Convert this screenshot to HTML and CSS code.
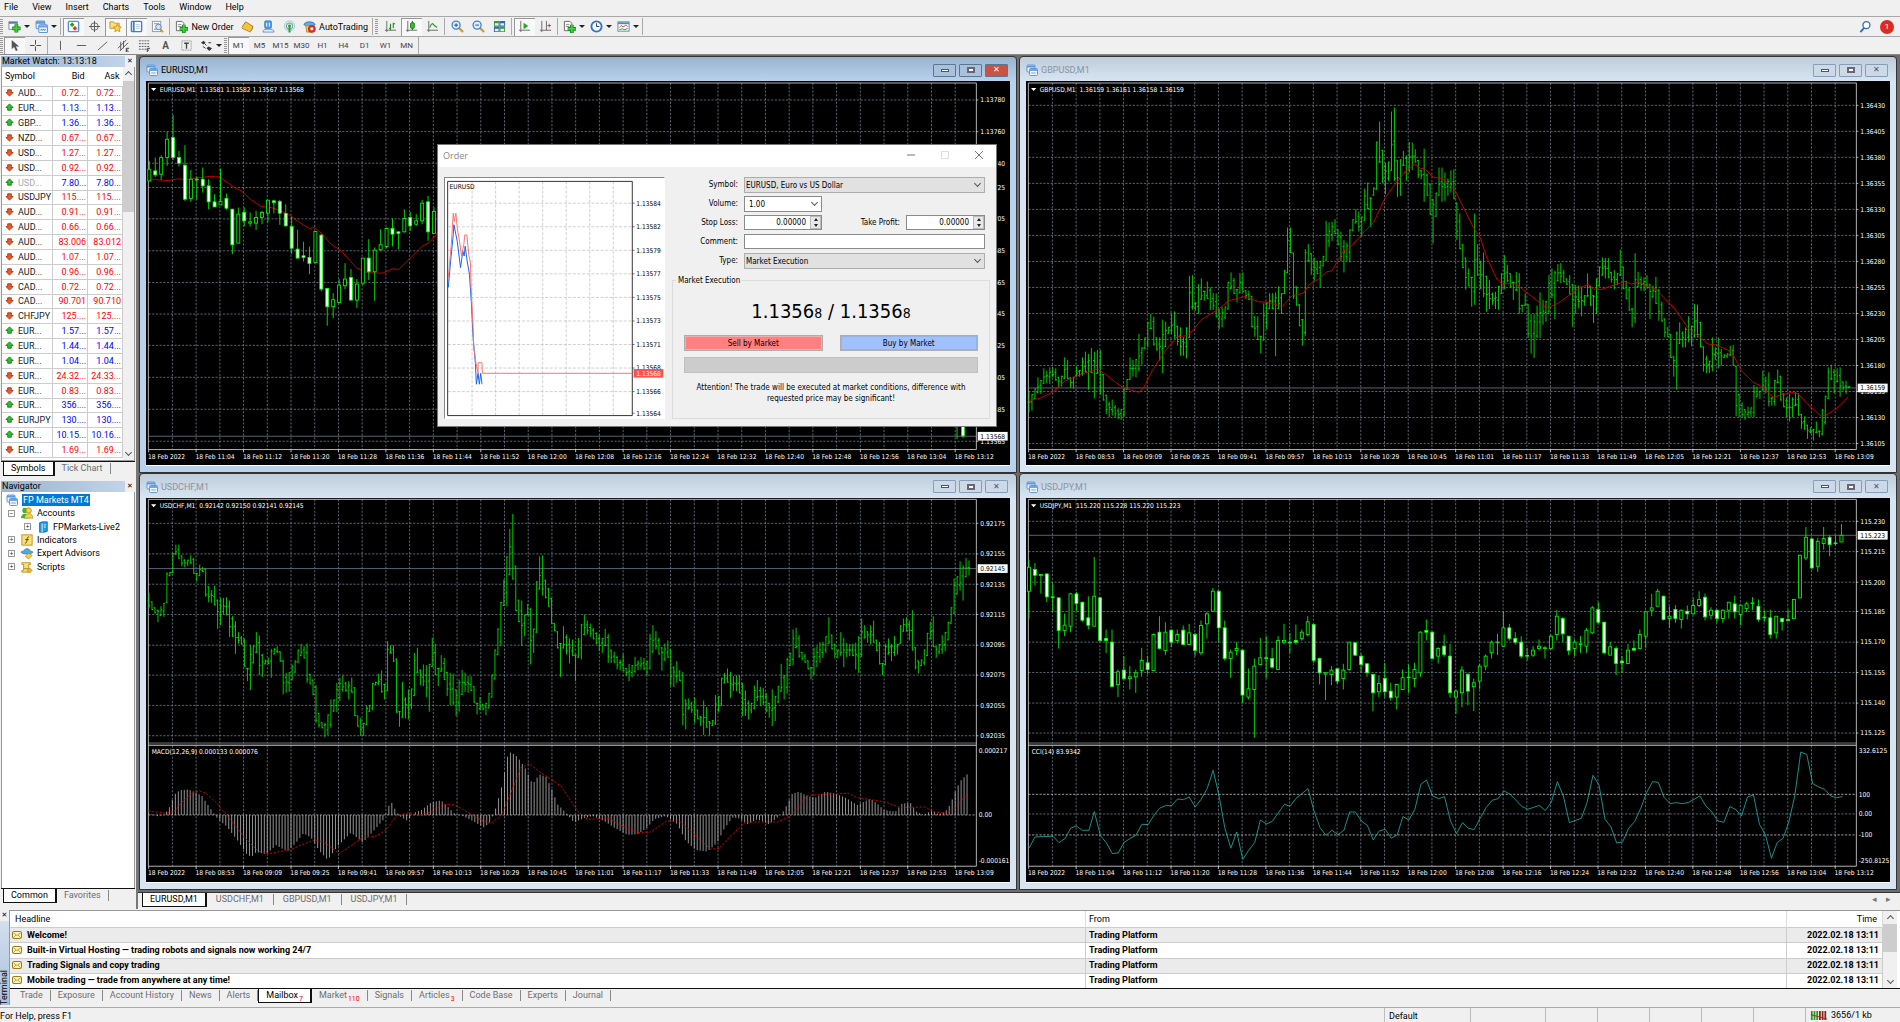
FILE: index.html
```html
<!DOCTYPE html>
<html lang="en">
<head>
<meta charset="utf-8">
<title>Trading Platform</title>
<link rel="stylesheet" href="styles.css">
</head>
<body>
<svg class="sprite" aria-hidden="true">
  <symbol id="i-win" viewBox="0 0 12 12"><rect x="1" y="1" width="8" height="7" rx="1" fill="#eaf3ff" stroke="#5f97dc"/><path d="M1 2.500h8" stroke="#5f97dc" stroke-width="2"/><rect x="3.500" y="4.500" width="8" height="7" rx="1" fill="#f4f9ff" stroke="#5f97dc"/><path d="M3.500 6h8" stroke="#6fa4e6" stroke-width="2"/><path d="M5 9.500l1-1 1 1 1-1 1 1 1-1" stroke="#5f97dc" fill="none"/></symbol>
  <symbol id="i-plus" viewBox="0 0 14 14"><rect x="1" y="2" width="9" height="8" fill="#fff" stroke="#6d8ab0"/><path d="M1 3h9" stroke="#4f79b0" stroke-width="2"/><path d="M9 4.500v9M4.500 9h9" stroke="#1f8a1f" stroke-width="4"/><path d="M9 5v8M5 9h8" stroke="#3fd03f" stroke-width="2"/></symbol>
  <symbol id="i-watch" viewBox="0 0 14 14"><rect x="1.500" y="1.500" width="11" height="11" rx="1" fill="#fff" stroke="#4f93d8" stroke-width="1.500"/><path d="M3 5l2.500-2.500L8 5 5.500 7.500z" fill="#22a022"/><path d="M6 9l2.500-2.500L11 9l-2.500 2.500z" fill="#e03a1c"/></symbol>
  <symbol id="i-target" viewBox="0 0 14 14"><circle cx="7" cy="7" r="4" fill="none" stroke="#666"/><path d="M7 1v12M1 7h12" stroke="#555"/></symbol>
  <symbol id="i-star" viewBox="0 0 14 14"><path d="M1 2h4l1 1.500h5V9H1z" fill="#f6dc84" stroke="#c59a2c"/><path d="M9 4.500l1.300 2.700 3 .4-2.200 2 .6 3L9 11.200l-2.700 1.400.6-3-2.200-2 3-.4z" fill="#ffd43c" stroke="#b98a12" stroke-width=".8"/></symbol>
  <symbol id="i-data" viewBox="0 0 14 14"><rect x="1.500" y="1.500" width="11" height="11" rx="1" fill="#fff" stroke="#3f7fc8" stroke-width="1.500"/><path d="M4 2v10" stroke="#3f7fc8" stroke-width="2"/><path d="M6.500 5h4M6.500 7h4M6.500 9h4" stroke="#a9c4e4"/></symbol>
  <symbol id="i-test" viewBox="0 0 14 14"><rect x="1.500" y="1.500" width="9" height="11" fill="#fdfdfd" stroke="#8b97a8"/><path d="M3 4h6M3 10h3" stroke="#88a"/><circle cx="8" cy="7.500" r="3" fill="#cfe4fa" stroke="#5a83b4"/><path d="M10.200 10l2.800 3" stroke="#c9962c" stroke-width="2"/></symbol>
  <symbol id="i-order" viewBox="0 0 14 14"><path d="M1.500 1.500h6l2 2v8h-8z" fill="#fff" stroke="#666"/><path d="M3 5h4M3 7h4" stroke="#888"/><path d="M9.500 5v9M5 9.500h9" stroke="#1f8a1f" stroke-width="4"/><path d="M9.500 5.500v8M5.500 9.500h8" stroke="#3fd03f" stroke-width="2"/></symbol>
  <symbol id="i-gold" viewBox="0 0 14 14"><path d="M1 8l4-6 8 5-3 5.500z" fill="#f3c53e" stroke="#a87812"/><path d="M1 8l9 4.500 3-3" fill="none" stroke="#fff0b0"/><path d="M1 8v1.500l9 4 3-4V8l-3 4.500z" fill="#c58d1c"/></symbol>
  <symbol id="i-person" viewBox="0 0 14 14"><rect x="3" y="1" width="7" height="8" rx="1" fill="#4aa3ee" stroke="#2f78c4"/><path d="M5 3v4M8 3v4" stroke="#fff"/><path d="M1 13c0-3 3-3 6-3s6 0 6 3z" fill="#e3eefb" stroke="#6a92c0"/></symbol>
  <symbol id="i-signal" viewBox="0 0 14 14"><g fill="none"><circle cx="7" cy="6.500" r="5.500" stroke="#9cc0d8"/><circle cx="7" cy="6.500" r="3.300" stroke="#6aa98c" stroke-width="1.200"/></g><circle cx="7" cy="6.500" r="1.600" fill="#2b9a3e"/><path d="M7 7v6.500" stroke="#2b9a3e" stroke-width="2"/></symbol>
  <symbol id="i-auto" viewBox="0 0 14 14"><path d="M1 5c1-4 11-4 12 0l-6 3z" fill="#62aee6" stroke="#2f78b4"/><path d="M3 6h8l-1 7H4z" fill="#f4c93c" stroke="#b98a1a"/><circle cx="9.500" cy="9.500" r="4.200" fill="#dd2a1b"/><rect x="8" y="8" width="3" height="3" fill="#fff"/></symbol>
  <symbol id="i-bars" viewBox="0 0 14 14"><path d="M3 1v12M1 11h12" stroke="#666" fill="none"/><path d="M7 4v7M5.500 9h1.500M10 3v6M10 4h2" stroke="#1d8f1d" stroke-width="1.200"/></symbol>
  <symbol id="i-candle" viewBox="0 0 14 14"><path d="M3 1v12M1 11h12" stroke="#666" fill="none"/><path d="M8 1v10" stroke="#137513"/><rect x="6" y="3" width="4" height="6" rx="1" fill="#2ecb2e" stroke="#137513"/></symbol>
  <symbol id="i-line" viewBox="0 0 14 14"><path d="M3 1v12M1 11h12" stroke="#666" fill="none"/><path d="M4 8c2-5 3-5 5-2l3 2" stroke="#1d9f1d" stroke-width="1.200" fill="none"/></symbol>
  <symbol id="i-zin" viewBox="0 0 14 14"><path d="M8.500 8.500l4.500 4.500" stroke="#d09c2c" stroke-width="2.400"/><circle cx="5.500" cy="5.500" r="4.300" fill="#e3f1ff" stroke="#3f82d2" stroke-width="1.400"/><path d="M3.500 5.500h4M5.500 3.500v4" stroke="#2566b8" stroke-width="1.200"/></symbol>
  <symbol id="i-zout" viewBox="0 0 14 14"><path d="M8.500 8.500l4.500 4.500" stroke="#d09c2c" stroke-width="2.400"/><circle cx="5.500" cy="5.500" r="4.300" fill="#e3f1ff" stroke="#3f82d2" stroke-width="1.400"/><path d="M3.500 5.500h4" stroke="#2566b8" stroke-width="1.200"/></symbol>
  <symbol id="i-tiles" viewBox="0 0 14 14"><path d="M1 1h6v6H1zM7 7h6v6H7z" fill="#3f9a2c"/><path d="M7 1h6v6H7zM1 7h6v6H1z" fill="#2f68b8"/><path d="M2 3.500h4v2.500H2zM8 3.500h4v2.500H8zM2 9.500h4V12H2zM8 9.500h4V12H8z" fill="#e8f2ff"/></symbol>
  <symbol id="i-scroll" viewBox="0 0 14 14"><path d="M3 1v12M1 11h12" stroke="#666" fill="none"/><path d="M6 3l5 3.500L6 10z" fill="#23a823"/></symbol>
  <symbol id="i-shift" viewBox="0 0 14 14"><path d="M3 1v12M1 11h12M8 1v10" stroke="#666" fill="none"/><path d="M9 6h4M11 4v4" stroke="#d0401c"/></symbol>
  <symbol id="i-clock" viewBox="0 0 14 14"><circle cx="7" cy="7" r="5.500" fill="#f3f9ff" stroke="#2f74c8" stroke-width="2"/><path d="M7 3.500V7h3" stroke="#333" fill="none"/></symbol>
  <symbol id="i-tpl" viewBox="0 0 14 14"><rect x="1" y="2" width="12" height="10" fill="#fff" stroke="#4f88c4"/><path d="M1 3.500h12" stroke="#4f88c4" stroke-width="2"/><path d="M2.500 8l2-2 2 1.500 3-2 2 1.500" stroke="#d0501c" fill="none"/><path d="M2.500 10.500l3-1 3 1 3-1.500" stroke="#2a9a2a" fill="none"/></symbol>
  <symbol id="i-cursor" viewBox="0 0 14 14"><path d="M4 1v10l2.500-2.500L8.500 13l2-1-2-4H12z" fill="#555"/></symbol>
  <symbol id="i-cross" viewBox="0 0 14 14"><path d="M7 1v5M7 8v5M1 7h5M8 7h5" stroke="#444"/></symbol>
  <symbol id="i-v" viewBox="0 0 14 14"><path d="M7 2v10" stroke="#555"/></symbol>
  <symbol id="i-h" viewBox="0 0 14 14"><path d="M2 7h10" stroke="#555"/></symbol>
  <symbol id="i-d" viewBox="0 0 14 14"><path d="M2 12L12 3" stroke="#555"/></symbol>
  <symbol id="i-chan" viewBox="0 0 14 14"><path d="M1 10l9-9M3 13l9-9M4 3v9M7 2v8" stroke="#555" fill="none"/><path d="M13 10h-3v4h3M10 12h2" stroke="#333" fill="none"/></symbol>
  <symbol id="i-fib" viewBox="0 0 14 14"><path d="M1 2h12M1 5h12M1 8h12M1 11h8" stroke="#555" stroke-dasharray="2 1"/><path d="M13 10h-3v4M10 12h2" stroke="#333" fill="none"/></symbol>
  <symbol id="i-box" viewBox="0 0 14 14"><rect x="2" y="2" width="10" height="10" fill="none" stroke="#777" stroke-dasharray="1 1"/><path d="M4.500 4.500h5M7 4.500v6" stroke="#444" stroke-width="1.500"/></symbol>
  <symbol id="i-arrows" viewBox="0 0 14 14"><path d="M1 4l3-2 2 2-2 2zM7 10l2-2 4 2-3 3z" fill="#333"/><path d="M5 5l2 2M3 8l3 2M9 4h3" stroke="#333"/></symbol>
  <symbol id="i-find" viewBox="0 0 14 14"><circle cx="8" cy="5.500" r="3.800" fill="#fff" stroke="#3566c8" stroke-width="1.400"/><path d="M5.500 8.500L1.500 13" stroke="#3566c8" stroke-width="2"/></symbol>
  <symbol id="i-up" viewBox="0 0 10 10"><path d="M5 1l4 4H7v3H3V5H1z" fill="#2fc02f" stroke="#137a13"/></symbol>
  <symbol id="i-dn" viewBox="0 0 10 10"><path d="M5 9l4-4H7V2H3v3H1z" fill="#f0582c" stroke="#a83212"/></symbol>
  <symbol id="i-mail" viewBox="0 0 10 8"><rect x=".5" y=".5" width="9" height="7" rx="1" fill="#fff3b8" stroke="#9a7b1c"/><path d="M1 1.500l4 3 4-3M1 7l3-3M9 7L6 4" stroke="#b08f2c" fill="none" stroke-width=".8"/></symbol>
  <symbol id="i-acc" viewBox="0 0 14 14"><circle cx="4.500" cy="4" r="3" fill="#39b82c"/><path d="M0 13c0-7 9-7 9 0z" fill="#39b82c"/><circle cx="9" cy="4" r="3.200" fill="#f5cf45" stroke="#a57b12" stroke-width=".7"/><path d="M4 13c0-7 10-7 10 0z" fill="#f5cf45" stroke="#a57b12" stroke-width=".7"/></symbol>
  <symbol id="i-srv" viewBox="0 0 14 14"><path d="M3 2l3-1h6v11l-3 1H3z" fill="#1f9be8" stroke="#0f6fb4"/><path d="M6 3v10M8 4.500h2.500M8 7h2.500" stroke="#fff"/></symbol>
  <symbol id="i-f" viewBox="0 0 14 14"><rect x="1" y="1" width="12" height="12" fill="#fbdf74" stroke="#b48d1c"/><path d="M9.500 3.500c-2-.6-2.200 1-2.500 3.500-.3 2.600-.6 4-2.500 3.500M5 6.500h4" stroke="#5a4508" stroke-width="1.100" fill="none"/></symbol>
  <symbol id="i-hat" viewBox="0 0 14 14"><path d="M0 6c1-1 2-1 3-1 1-4 7-4 8 0 1 0 2 0 3 1-2 3-12 3-14 0z" fill="#53a9dd" stroke="#2b75a8" stroke-width=".8"/><path d="M9 7l4 3-4 4-4-3z" fill="#f5cf45" stroke="#a57b12" stroke-width=".7"/></symbol>
  <symbol id="i-scr" viewBox="0 0 14 14"><path d="M1 2h10v2H9v5H3V4H1z" fill="#f7dd80" stroke="#b48d1c"/><path d="M3 9h7v4H1v-2h2z" fill="#f7dd80" stroke="#b48d1c"/><path d="M10 8l3 3-3 3-3-3z" fill="#f0b828" stroke="#a57b12" stroke-width=".7"/></symbol>
</svg>

<nav class="menu"><a href="#">File</a><a href="#">View</a><a href="#">Insert</a><a href="#">Charts</a><a href="#">Tools</a><a href="#">Window</a><a href="#">Help</a></nav>

<div class="bar">
  <i class="grip"></i>
  <button class="t dd" aria-label="New chart"><svg><use href="#i-plus"/></svg></button>
  <button class="t dd" aria-label="Profiles"><svg><use href="#i-win"/></svg></button>
  <i class="sep"></i>
  <button class="t on" aria-label="Market Watch"><svg><use href="#i-watch"/></svg></button>
  <button class="t" aria-label="Data Window"><svg><use href="#i-target"/></svg></button>
  <button class="t on" aria-label="Navigator"><svg><use href="#i-star"/></svg></button>
  <button class="t on" aria-label="Terminal"><svg><use href="#i-data"/></svg></button>
  <button class="t" aria-label="Strategy Tester"><svg><use href="#i-test"/></svg></button>
  <i class="sep"></i>
  <button class="t wide"><svg><use href="#i-order"/></svg>New Order</button>
  <button class="t" aria-label="MetaEditor"><svg><use href="#i-gold"/></svg></button>
  <button class="t" aria-label="Market"><svg><use href="#i-person"/></svg></button>
  <button class="t" aria-label="Signals"><svg><use href="#i-signal"/></svg></button>
  <button class="t auto"><svg><use href="#i-auto"/></svg>AutoTrading</button>
  <i class="sep"></i><i class="grip"></i>
  <button class="t" aria-label="Bar chart"><svg><use href="#i-bars"/></svg></button>
  <button class="t on" aria-label="Candlesticks"><svg><use href="#i-candle"/></svg></button>
  <button class="t" aria-label="Line chart"><svg><use href="#i-line"/></svg></button>
  <i class="sep"></i>
  <button class="t" aria-label="Zoom in"><svg><use href="#i-zin"/></svg></button>
  <button class="t" aria-label="Zoom out"><svg><use href="#i-zout"/></svg></button>
  <button class="t" aria-label="Tile windows"><svg><use href="#i-tiles"/></svg></button>
  <i class="sep"></i>
  <button class="t on" aria-label="Auto scroll"><svg><use href="#i-scroll"/></svg></button>
  <button class="t" aria-label="Chart shift"><svg><use href="#i-shift"/></svg></button>
  <i class="sep"></i>
  <button class="t dd" aria-label="Indicators"><svg><use href="#i-order"/></svg></button>
  <button class="t dd" aria-label="Periods"><svg><use href="#i-clock"/></svg></button>
  <button class="t dd" aria-label="Templates"><svg><use href="#i-tpl"/></svg></button>
  <i class="sep"></i>
  <span class="fill"></span>
  <button class="t" aria-label="Search"><svg><use href="#i-find"/></svg></button>
  <button class="t chat" aria-label="Notifications">1</button>
</div>
<div class="bar low">
  <i class="grip"></i>
  <button class="t on" aria-label="Cursor"><svg><use href="#i-cursor"/></svg></button>
  <button class="t" aria-label="Crosshair"><svg><use href="#i-cross"/></svg></button>
  <i class="sep"></i>
  <button class="t" aria-label="Vertical line"><svg><use href="#i-v"/></svg></button>
  <button class="t" aria-label="Horizontal line"><svg><use href="#i-h"/></svg></button>
  <button class="t" aria-label="Trendline"><svg><use href="#i-d"/></svg></button>
  <button class="t" aria-label="Channel"><svg><use href="#i-chan"/></svg></button>
  <button class="t" aria-label="Fibonacci"><svg><use href="#i-fib"/></svg></button>
  <button class="t letter">A</button>
  <button class="t" aria-label="Text label"><svg><use href="#i-box"/></svg></button>
  <button class="t dd" aria-label="Arrows"><svg><use href="#i-arrows"/></svg></button>
  <i class="grip"></i>
  <button class="t tf on">M1</button><button class="t tf">M5</button><button class="t tf">M15</button><button class="t tf">M30</button><button class="t tf">H1</button><button class="t tf">H4</button><button class="t tf">D1</button><button class="t tf">W1</button><button class="t tf">MN</button>
  <i class="sep"></i>
</div>

<main class="main">
  <aside class="side">
    <section class="panel">
      <h2 class="ptitle">Market Watch: 13:13:18<button aria-label="Close">✕</button></h2>
      <div class="watch">
        <table class="quotes">
          <thead><tr><th>Symbol</th><th>Bid</th><th>Ask</th></tr></thead>
          <tbody id="quotes"></tbody>
        </table>
        <div class="scroll"><b class="up"></b><i class="thumb long"></i><b></b></div>
      </div>
      <div class="tabs"><button class="cur">Symbols</button><button>Tick Chart</button></div>
    </section>
    <section class="panel nav">
      <h2 class="ptitle">Navigator<button aria-label="Close">✕</button></h2>
      <ul class="tree">
        <li><svg><use href="#i-win"/></svg><span class="sel">FP Markets MT4</span></li>
        <li class="l1"><i class="box">−</i><svg><use href="#i-acc"/></svg><span>Accounts</span></li>
        <li class="l2"><i class="box">+</i><svg><use href="#i-srv"/></svg><span>FPMarkets-Live2</span></li>
        <li class="l1"><i class="box">+</i><svg><use href="#i-f"/></svg><span>Indicators</span></li>
        <li class="l1"><i class="box">+</i><svg><use href="#i-hat"/></svg><span>Expert Advisors</span></li>
        <li class="l1"><i class="box">+</i><svg><use href="#i-scr"/></svg><span>Scripts</span></li>
      </ul>
      <div class="tabs"><button class="cur">Common</button><button>Favorites</button></div>
    </section>
  </aside>

  <div class="work">
    <div class="grid">
      <section class="win active"><header><svg><use href="#i-win"/></svg><h3>EURUSD,M1</h3><button aria-label="Minimise"><i class="mn"></i></button><button aria-label="Maximise"><i class="mx"></i></button><button class="x" aria-label="Close">✕</button></header><svg class="chart" id="eurusd" viewBox="24 80 2595 1153"></svg></section>
      <section class="win"><header><svg><use href="#i-win"/></svg><h3>GBPUSD,M1</h3><button aria-label="Minimise"><i class="mn"></i></button><button aria-label="Maximise"><i class="mx"></i></button><button class="x" aria-label="Close">✕</button></header><svg class="chart" id="gbpusd" viewBox="31 80 2595 1153"></svg></section>
      <section class="win"><header><svg><use href="#i-win"/></svg><h3>USDCHF,M1</h3><button aria-label="Minimise"><i class="mn"></i></button><button aria-label="Maximise"><i class="mx"></i></button><button class="x" aria-label="Close">✕</button></header><svg class="chart" id="usdchf" viewBox="24 75 2595 1153"></svg></section>
      <section class="win"><header><svg><use href="#i-win"/></svg><h3>USDJPY,M1</h3><button aria-label="Minimise"><i class="mn"></i></button><button aria-label="Maximise"><i class="mx"></i></button><button class="x" aria-label="Close">✕</button></header><svg class="chart" id="usdjpy" viewBox="31 75 2595 1153"></svg></section>
    </div>
    <div class="tabs ctabs"><button class="cur">EURUSD,M1</button><button>USDCHF,M1</button><button>GBPUSD,M1</button><button>USDJPY,M1</button><span class="arr">◂</span><span class="arr">▸</span></div>

    <form class="order">
      <header><h3>Order</h3><button type="button" aria-label="Minimise"><svg viewBox="0 0 10 10"><path d="M1 5h8" stroke="#777"/></svg></button><button type="button" aria-label="Maximise"><svg viewBox="0 0 10 10"><path d="M1.500 1.500h7v7h-7z" stroke="#ddd" fill="none"/></svg></button><button type="button" aria-label="Close"><svg viewBox="0 0 10 10"><path d="M1 1l8 8M9 1l-8 8" stroke="#777"/></svg></button></header>
      <div class="obody">
        <svg class="ticks" id="ticks" viewBox="918 369 663 726"></svg>
        <div class="oright">
          <div class="fields">
            <label for="sym">Symbol:</label><span class="pick gray full"><select id="sym"><option>EURUSD, Euro vs US Dollar</option></select></span>
            <label for="vol">Volume:</label><span class="pick"><select id="vol"><option>1.00</option></select></span>
            <label class="c1" for="sl">Stop Loss:</label><span class="spin"><input id="sl" value="0.00000"><i></i></span><label for="tp">Take Profit:</label><span class="spin"><input id="tp" value="0.00000"><i></i></span>
            <label for="cm">Comment:</label><input class="full cm" id="cm">
            <label for="ty">Type:</label><span class="pick gray full"><select id="ty"><option>Market Execution</option></select></span>
          </div>
          <fieldset>
            <legend>Market Execution</legend>
            <p class="price">1.1356<small>8</small> / 1.1356<small>8</small></p>
            <div class="deal"><button type="button" class="sell">Sell by Market</button><button type="button" class="buy">Buy by Market</button></div>
            <div class="idle"></div>
            <p class="note">Attention! The trade will be executed at market conditions, difference with<br>requested price may be significant!</p>
          </fieldset>
        </div>
      </div>
    </form>
  </div>
</main>

<section class="terminal">
  <div class="strip"><button aria-label="Close">✕</button><span>Terminal</span></div>
  <div class="tmain">
    <div class="mailwrap">
      <table class="mail">
        <thead><tr><th>Headline</th><th class="from">From</th><th class="time">Time</th></tr></thead>
        <tbody>
          <tr><td><svg><use href="#i-mail"/></svg>Welcome!</td><td>Trading Platform</td><td class="time">2022.02.18 13:11</td></tr>
          <tr><td><svg><use href="#i-mail"/></svg>Built-in Virtual Hosting — trading robots and signals now working 24/7</td><td>Trading Platform</td><td class="time">2022.02.18 13:11</td></tr>
          <tr><td><svg><use href="#i-mail"/></svg>Trading Signals and copy trading</td><td>Trading Platform</td><td class="time">2022.02.18 13:11</td></tr>
          <tr><td><svg><use href="#i-mail"/></svg>Mobile trading — trade from anywhere at any time!</td><td>Trading Platform</td><td class="time">2022.02.18 13:11</td></tr>
        </tbody>
      </table>
      <div class="scroll"><b class="up"></b><i class="thumb"></i><b></b></div>
    </div>
    <div class="tabs ttabs"><button>Trade</button><button>Exposure</button><button>Account History</button><button>News</button><button>Alerts</button><button class="cur">Mailbox<sub>7</sub></button><button>Market<sub>110</sub></button><button>Signals</button><button>Articles<sub>3</sub></button><button>Code Base</button><button>Experts</button><button>Journal</button></div>
  </div>
</section>
<footer class="status"><span class="help">For Help, press F1</span><span class="c1">Default</span><span class="c2"></span><span class="c3"></span><span class="c3"></span><span class="c3"></span><span class="c3"></span><span class="c3"></span><span class="conn"><svg viewBox="0 0 18 10"><path d="M1 0v10M4 0v10M7 0v10" stroke="#2a9a2a" stroke-width="2"/><path d="M10 0v10M13 0v10M16 0v10" stroke="#8a2a1a" stroke-width="2"/><path d="M0 4L18 9" stroke="#b02010"/></svg>3656/1 kb</span></footer>
<script src="charts.js"></script>
</body>
</html>
```
FILE: styles.css
```css
* { box-sizing: border-box; }
body {
  margin: 0; min-height: 100vh; display: flex; flex-direction: column;
  background: #f0f0f0; color: #000; font: 9px/12px Roboto, "Open Sans", sans-serif;
}
h2, h3, p, ul { margin: 0; padding: 0; font-size: inherit; font-weight: normal; }
ul { list-style: none; }
button { font: inherit; color: inherit; background: none; border: 0; padding: 0; margin: 0; }
input, select { font: inherit; color: inherit; margin: 0; border-radius: 0; }
.sprite { position: absolute; width: 0; height: 0; }

.menu { display: flex; height: 16px; padding: 1px 4px; gap: 14px; line-height: 13px; }
.menu a { color: #000; text-decoration: none; }

.bar { display: flex; align-items: center; height: 20px; border-top: 1px solid #a8a8a8; }
.bar.low { height: 19px; border-bottom: 1px solid #888; }
.bar .grip { width: 3px; height: 16px; margin-right: 2px; background: repeating-linear-gradient(#999 0 1px, #f0f0f0 1px 2px); }
.bar.low .grip { margin-right: 1px; }
.bar .sep { width: 1px; height: 17px; margin: 0 2px 0 1px; background: #aaa; }
.bar .fill { flex: 1; }
.t { display: flex; align-items: center; justify-content: center; width: 21px; height: 18px; }
.t svg { width: 13px; height: 13px; }
.t.on { background: #f8f8f8; box-shadow: inset 1px 1px #999; }
.low .t { height: 17px; }
.t.dd { width: 27px; gap: 3px; }
.t.dd::after { content: ""; border: 3px solid transparent; border-top-color: #222; border-bottom: 0; }
.t.wide { width: 65px; gap: 3px; }
.t.auto { width: 71px; gap: 3px; }
.t.tf { color: #444; font-size: 8px; }
.t.letter { font-size: 10px; font-weight: bold; color: #555; }
.t.chat { width: 14px; height: 14px; margin: 0 6px 0 4px; border-radius: 7px; background: #dd2b20; color: #fff; font-size: 8px; }

.main { display: flex; flex: 1; }
.side { width: 138px; display: flex; flex-direction: column; gap: 5px; border-right: 2px solid #777; padding: 1px 1px 6px 1px; }
.panel { display: flex; flex-direction: column; }
.nav { flex: 1; }
.ptitle { display: flex; justify-content: space-between; height: 11px; line-height: 11px; padding-left: 1px; background: linear-gradient(90deg, #99b4d1, #c5d6ea); }
.ptitle button { width: 10px; font: 7px/11px "DejaVu Sans", sans-serif; background: #f0f0f0; }
.watch { display: flex; height: 394px; overflow: hidden; background: #fff; border: 1px solid #999; border-top: 0; }
.quotes { flex: 1; table-layout: fixed; border-collapse: collapse; height: 391px; }
.quotes th { height: 19px; padding: 0 3px; font-weight: normal; text-align: right; border-bottom: 1px solid #ccc; }
.quotes th:first-child { width: 50px; text-align: left; }
.quotes th:nth-child(2) { width: 35px; }
.quotes td { padding: 0 1px; line-height: 10px; text-align: right; border-bottom: 1px solid #ccc; border-right: 1px solid #ccc; white-space: nowrap; }
.quotes td:first-child { text-align: left; color: #222; }
.quotes td svg { width: 9px; height: 9px; margin: 0 4px 0 2px; vertical-align: -1px; }
.quotes .u { color: #00f; }
.quotes .d { color: #f00; }
.quotes .dim td:first-child { color: #aaa; }
.scroll { width: 11px; background: #f0f0f0; display: flex; flex-direction: column; align-items: center; }
.scroll b { width: 5px; height: 5px; margin: 2px 0 5px; border: solid #555; border-width: 0 1px 1px 0; transform: rotate(45deg); }
.scroll .up { margin: 5px 0 3px; transform: rotate(225deg); }
.scroll .thumb { align-self: stretch; height: 28px; background: #cdcdcd; margin-bottom: auto; }
.scroll .thumb.long { height: 131px; margin-top: 1px; }

.tabs { display: flex; height: 15px; border-top: 1px solid #111; padding-left: 2px; color: #6d6d6d; line-height: 12px; }
.tabs button { padding: 0 7px; border-right: 1px solid #888; height: 11px; margin-top: 1px; line-height: 11px; }
.tabs .cur { background: #fff; color: #000; border: 1px solid #111; border-top: 0; border-right-width: 2px; height: 14px; margin-top: 0; }
.tree { flex: 1; background: #fff; border: 1px solid #999; border-width: 0 1px; padding: 1px 4px; display: grid; grid-template-rows: 13px 14px 13px 13px 14px 13px; align-content: start; }
.tree li { display: flex; align-items: center; gap: 4px; white-space: nowrap; }
.tree svg { width: 12px; height: 12px; }
.tree .sel { background: #0078d7; color: #fff; padding: 0 1px; }
.tree .l1 { padding-left: 2px; }
.tree .l2 { padding-left: 18px; }
.tree .box { width: 7px; height: 7px; border: 1px solid #999; font: 7px/5px "Open Sans", sans-serif; text-align: center; color: #226; margin-right: 2px; }

.work { flex: 1; position: relative; display: flex; flex-direction: column; min-width: 0; background: #f0f0f0; }
.grid { display: grid; grid-template-columns: 1fr 1fr; column-gap: 2px; padding: 1px 3px 2px 1px; background: #6d6d6d; }
.win { display: flex; flex-direction: column; min-width: 0; padding: 0 6px 6px; border: 1px solid #333; border-radius: 4px 4px 0 0; background: linear-gradient(#bfcddb, #d7e4f2 24px); }
.win.active { background: linear-gradient(#99b4d1, #b9d1ea 24px); }
.win header { display: flex; align-items: center; gap: 3px; height: 24px; padding: 2px 2px 0 0; }
.win header svg { width: 12px; height: 12px; }
.win h3 { flex: 1; color: #8b939d; font-size: 9px; }
.win.active h3 { color: #000; }
.win header button { display: flex; align-items: center; justify-content: center; width: 23px; height: 13px; border: 1px solid #8a9db5; border-radius: 1px; font-size: 8px; line-height: 10px; color: #4a5564; background: #ccd9e8; }
.win.active header button { background: #a9c1dd; border-color: #5d7690; }
.win.active header .x { background: #c95340; color: #fff; }
.mn { width: 8px; height: 3px; border: 1px solid #555; background: #fff; }
.mx { width: 8px; height: 6px; border: 2px solid #667; background: #fff; }
.chart { display: block; width: 100%; background: #000; border-bottom: 1px solid #fff; }
.chart text, .ticks text { font-family: "DejaVu Sans Condensed", "Open Sans", sans-serif; font-size: 20px; }
.ctabs { padding-left: 4px; height: 17px; border-top: 1px solid #333; }
.ctabs button { padding: 0 9px; }
.ctabs .cur { padding: 0 7px; }
.ctabs .arr { width: 14px; color: #777; }
.ctabs .arr:nth-last-child(2) { margin-left: auto; }

.order { position: absolute; left: 299px; top: 89px; width: 560px; background: #f0f0f0; border: 1px solid #777; font: 8px/11px "DejaVu Sans Condensed", "Open Sans", sans-serif; }
.order header { display: flex; align-items: center; height: 22px; padding-left: 5px; background: #fff; color: #888; }
.order header h3 { flex: 1; font: 9px/12px "Open Sans", sans-serif; }
.order header button { width: 34px; height: 20px; }
.order header svg { width: 10px; height: 10px; }
.obody { display: flex; gap: 7px; padding: 10px 6px 7px; }
.ticks { width: 221px; height: 242px; background: #fff; border: 1px solid #888; border-right-color: #fff; border-bottom-color: #fff; }
.oright { flex: 1; display: flex; flex-direction: column; }
.fields { display: grid; grid-template-columns: 66px 78px 1fr 79px; column-gap: 6px; row-gap: 4px; grid-auto-rows: 15px; padding-right: 5px; margin-bottom: 7px; }
.fields label { text-align: right; line-height: 15px; }
.fields .full { grid-column: 2 / 5; }
.fields label[for="vol"], .fields .c1, .fields label[for="cm"], .fields label[for="ty"] { grid-column: 1; }
.pick { position: relative; display: block; height: 16px; }
.pick select { appearance: none; width: 100%; height: 16px; padding: 0 4px; border: 1px solid #8a8a8a; background: #fff; }
.pick.gray select { background: #e1e1e1; border-color: #adadad; padding: 0 1px; }
.pick::after { content: ""; position: absolute; right: 5px; top: 4px; width: 4px; height: 4px; border: solid #555; border-width: 0 1px 1px 0; transform: rotate(45deg); }
.fields input { width: 100%; height: 15px; border: 1px solid #8a8a8a; background: #fff; padding: 0 3px; }
.spin { display: flex; }
.spin input { text-align: right; padding-right: 15px; }
.spin i { display: flex; flex-direction: column; align-items: center; justify-content: center; gap: 3px; width: 11px; flex: none; margin: 1px 1px 0 -12px; height: 13px; background: #e8e8e8; border: 1px solid #bbb; }
.spin i::before, .spin i::after { content: ""; border: 2px solid transparent; }
.spin i::before { border-top: 0; border-bottom: 3px solid #222; }
.spin i::after { border-bottom: 0; border-top: 3px solid #222; }
fieldset { flex: 1; margin: 0; padding: 11px 11px 0; border: 1px solid #dcdcdc; min-width: 0; }
legend { padding: 0 2px; margin-left: -8px; }
.price { text-align: center; font-size: 20px; line-height: 28px; }
.price small { font-size: 14px; }
.deal { display: flex; gap: 17px; margin-top: 8px; }
.deal button { flex: 1; height: 16px; border: 1px solid #adadad; background: #ff8080; box-shadow: inset 0 0 0 1px #e9b0b0; }
.deal .buy { background: #a0c0ff; box-shadow: inset 0 0 0 1px #9ab4e0; }
.idle { height: 16px; margin-top: 6px; background: #ccc; border: 1px solid #c0c0c0; }
.note { margin-top: 9px; text-align: center; }

.terminal { display: flex; margin-top: 1px; }
.strip { width: 9px; display: flex; flex-direction: column; background: linear-gradient(#d7e4f2, #a9bfd8); }
.strip button { height: 11px; font: 7px/10px "DejaVu Sans", sans-serif; background: #f0f0f0; }
.strip span { margin-top: auto; writing-mode: vertical-rl; transform: rotate(180deg); line-height: 9px; }
.tmain { flex: 1; border-top: 1px solid #999; border-left: 1px solid #999; min-width: 0; }
.mailwrap { display: flex; height: 77px; background: #fff; }
.mailwrap .scroll { width: 14px; margin-right: 3px; }
.mail { flex: 1; border-collapse: collapse; table-layout: fixed; height: 77px; }
.mail th { height: 17px; font-weight: normal; text-align: left; padding: 0 5px; border-right: 1px solid #ddd; }
.mail .from { width: 701px; padding-left: 3px; }
.mail .time { text-align: right; }
.mail th.time { width: 96px; }
.mail td { padding: 0 3px; font-weight: bold; line-height: 11px; border-top: 1px solid #ccc; border-right: 1px solid #ccc; white-space: nowrap; }
.mail tbody tr:nth-child(odd) { background: #ebebeb; }
.mail td svg { width: 10px; height: 8px; margin: 0 5px 0 -1px; vertical-align: -1px; }
.ttabs { padding-left: 3px; height: 17px; }
.ttabs sub { color: #f00; font-size: 7px; line-height: 0; vertical-align: -3px; margin-left: 1px; }
.status { display: flex; height: 17px; margin-top: 2px; border-top: 1px solid #aaa; line-height: 17px; }
.status .help { flex: 1; }
.status span + span { border-left: 1px solid #bbb; padding-left: 4px; }
.status .c1 { width: 86px; }
.status .c2 { width: 75px; }
.status .c3 { width: 52px; }
.status .conn { width: 95px; display: flex; align-items: center; gap: 3px; }
.status svg { width: 18px; height: 9px; }
```
FILE: charts.js
```js
const NS = 'http://www.w3.org/2000/svg';
function add(parent, name, attrs, text) {
  const e = document.createElementNS(NS, name);
  for (const k in attrs) e.setAttribute(k, attrs[k]);
  if (text !== undefined) e.textContent = text;
  parent.appendChild(e);
  return e;
}
const pairs = s => s.trim().split(/\s+/).map(p => p.split(',').map(Number));
const poly = pts => 'M' + pts.map(p => p.join(' ')).join('L');
const shift = (pts, dx) => pts.map(([x, y]) => [x + dx, y]);
const HALF = 1320;

// Market Watch rows: symbol, bid, ask, direction
const quotes = `AUD... 0.72... 0.72... d|EUR... 1.13... 1.13... u|GBP... 1.36... 1.36... u|NZD... 0.67... 0.67... d|USD... 1.27... 1.27... d|USD... 0.92... 0.92... d|USD... 7.80... 7.80... u|USDJPY 115.... 115.... d|AUD... 0.91... 0.91... d|AUD... 0.66... 0.66... d|AUD... 83.006 83.012 d|AUD... 1.07... 1.07... d|AUD... 0.96... 0.96... d|CAD... 0.72... 0.72... d|CAD... 90.701 90.710 d|CHFJPY 125.... 125.... d|EUR... 1.57... 1.57... u|EUR... 1.44... 1.44... u|EUR... 1.04... 1.04... u|EUR... 24.32... 24.33... d|EUR... 0.83... 0.83... d|EUR... 356.... 356.... u|EURJPY 130.... 130.... u|EUR... 10.15... 10.16... u|EUR... 1.69... 1.69... d`;
document.getElementById('quotes').innerHTML = quotes.split('|').map((q, i) => {
  const [s, b, a, d] = q.split(' ');
  return `<tr class="${i === 6 ? 'dim' : ''}"><td><svg><use href="#i-${d === 'u' ? 'up' : 'dn'}"/></svg>${s}</td><td class="${d}">${b}</td><td class="${d}">${a}</td></tr>`;
}).join('');

function frame(id, c) {
  const svg = document.getElementById(id), L = c.left, R = L + 2487;
  const top = c.split ? 79 : 86, axis = c.split ? 1181 : 1187, mid = c.split ? 812 : axis;
  const dash = { stroke: '#778899', 'stroke-width': 2.2, 'stroke-dasharray': '6.7 4.5', fill: 'none' };
  let v = '', h = '';
  for (let k = 1; k < 35; k++) v += `M${L + 1 + 71.25 * k} ${top}V${mid}` + (c.split ? `M${L + 1 + 71.25 * k} 818V${axis}` : '');
  c.rows.forEach(([y]) => { h += `M${L} ${y}H${R}`; });
  add(svg, 'path', { d: v + h, ...dash });
  if (c.split) {
    add(svg, 'path', { d: `M${L} 811H${R}`, stroke: '#888', 'stroke-width': 2.5 });
    add(svg, 'path', { d: `M${L} 817.500H${R}`, stroke: '#fff', 'stroke-width': 2.5 });
  }
  add(svg, 'path', { d: `M${L} ${top}H${R}V${axis}H${L}Z`, fill: 'none', stroke: '#e0e0e0', 'stroke-width': 2.4 });
  add(svg, 'path', { d: `M${L} ${c.last}H${R}`, stroke: '#778899', 'stroke-width': 2.2 });
  c.rows.forEach(([y, t]) => {
    add(svg, 'path', { d: `M${R} ${y}h6`, stroke: '#fff', 'stroke-width': 2 });
    add(svg, 'text', { x: R + 12, y: y + 7, fill: '#fff' }, t);
  });
  c.times.forEach((t, i) => {
    add(svg, 'path', { d: `M${L + 1 + 142.5 * i} ${axis}v8`, stroke: '#fff', 'stroke-width': 2.2 });
    add(svg, 'text', { x: L - 1 + 142.5 * i, y: axis + 27, fill: '#fff' }, '18 Feb ' + t);
  });
  add(svg, 'path', { d: `M${L + 8} ${top + 15}h16l-8 9z`, fill: '#fff' });
  add(svg, 'text', { x: L + 34, y: top + 26, fill: '#fff' }, c.title.replace('  ', '\u00a0\u00a0'));
  const tag = () => {
    add(svg, 'rect', { x: R + 4, y: c.last - 13, width: 90, height: 26, fill: '#fff' });
    add(svg, 'text', { x: R + 12, y: c.last + 7 }, c.tag);
  };
  return { svg, L, R, tag };
}
function average(svg, s, extra) {
  add(svg, 'path', { d: poly(s), fill: 'none', stroke: '#e00000', 'stroke-width': 2.6, ...extra });
}
function bars(svg, left, width, s) {
  const n = s.length, step = width / (n - 1);
  let d = '';
  s.forEach(([hi, lo], i) => {
    const x = left + i * step, next = s[Math.min(i + 1, n - 1)], prev = s[Math.max(i - 1, 0)];
    const clamp = y => Math.max(hi + 2, Math.min(lo - 2, y));
    const o = clamp((prev[0] + prev[1]) / 2), c = clamp((next[0] + next[1]) / 2);
    d += `M${x} ${hi}V${lo}M${x - 4} ${o}h4M${x} ${c}h4`;
  });
  add(svg, 'path', { d, fill: 'none', stroke: '#00f000', 'stroke-width': 2.5 });
}
function candles(svg, left, s) {
  s.forEach(([hi, t, b, lo, down], i) => {
    const x = left + i * 17.812;
    add(svg, 'path', { d: `M${x} ${hi}V${lo}`, stroke: '#0f0', 'stroke-width': 2.5 });
    add(svg, 'rect', { x: x - 4.5, y: t, width: 9, height: Math.max(b - t, 1), fill: down ? '#fff' : '#000', stroke: '#0f0', 'stroke-width': 2.5 });
  });
}
const clock = (h, m, step, n) => ['2022'].concat(Array.from({ length: n - 1 }, (_, i) => {
  const q = h * 60 + m + step * i;
  return String(Math.floor(q / 60)).padStart(2, '0') + ':' + String(q % 60).padStart(2, '0');
}));
const long = clock(8, 53, 16, 18), short = clock(11, 4, 8, 18);

// EURUSD
const eur = frame('eurusd', {
  left: 31, last: 1147, tag: '1.13568', title: 'EURUSD,M1  1.13581 1.13582 1.13567 1.13568', times: short,
  rows: [[137, '1.13780'], [232, '1.13760'], [327, '1.13740'], [400, '1.13725'], [494, '1.13705'], [590, '1.13685'], [685, '1.13665'], [780, '1.13645'], [874, '1.13625'], [970, '1.13605'], [1066, '1.13585'], [1162, '1.13565']]
});
average(eur.svg, pairs('31,373 60,377 90,379 120,374 150,376 185,370 215,367 245,368 285,397 310,410 340,437 370,457 400,460 425,468 455,483 490,508 515,523 530,520 550,537 580,570 610,590 655,640 685,656 735,657 765,644 783,646 820,610 855,575 875,565 897,540 930,500'));
candles(eur.svg, 34, pairs(`320,345,380,380,0 310,350,362,368,1 303,310,360,377,0 232,255,310,335,0 182,250,310,318,1 290,310,327,337,1
273,333,435,440,1 347,375,433,443,0 367,375,377,437,1 340,375,395,415,1 375,395,443,465,1 420,443,458,458,1 343,442,452,452,0 418,433,462,467,1
465,465,572,600,1 460,480,567,567,0 460,475,500,517,1 475,503,507,517,0 470,490,507,527,0 470,475,490,510,0 437,438,477,505,0 437,440,445,478,1
437,442,477,512,1 450,478,515,517,1 488,517,582,600,1 527,585,612,612,1 563,605,610,622,1 577,610,628,660,1 530,532,625,625,0 540,543,705,712,1
703,703,758,815,1 717,737,758,792,0 675,693,745,747,0 627,675,695,705,0 645,670,738,738,1 675,690,738,762,0 612,612,687,693,0 555,612,653,678,1
580,588,653,740,0 525,572,587,590,0 520,523,577,582,0 493,523,540,577,1 532,533,538,585,1 465,493,533,535,0 473,490,515,530,1 480,500,510,515,0
437,447,500,510,0 425,443,533,560,1 460,472,538,540,0`));
candles(eur.svg, 2460, pairs('1080,1090,1105,1155,0 1090,1095,1146,1152,1'));
eur.tag();

// GBPUSD
const gbp = frame('gbpusd', {
  left: 38, last: 1002, tag: '1.36159', title: 'GBPUSD,M1  1.36159 1.36161 1.36158 1.36159', times: long,
  rows: Array.from({ length: 14 }, (_, i) => [153 + 78.15 * i, (1.3643 - 0.00025 * i).toFixed(5)])
});
bars(gbp.svg, 40, 2463, pairs(`1012,1075 1020,1070 1003,1035 970,1018 978,1020 943,990 950,988 940,990 940,970 943,980 968,1000 965,998 910,975 918,975 970,1002 968,1003
937,968 948,968 910,965 893,955 900,1007 882,957 893,1033 888,960 888,1022 960,1040 1022,1080 1043,1090 1037,1085 1053,1090 1063,1095 1065,1098 1003,1088
975,1008 910,978 918,968 915,970 840,952 880,932 850,885 805,880 780,825 788,875 850,890 850,920 797,957 803,880 818,840 780,840 772,855 815,875 820,905
850,905 820,913 665,852 663,767 745,770 690,780 673,738 710,740 682,735 700,768 717,768 718,790 765,825 758,820 757,795 683,767 655,705 672,720 705,745
657,718 655,715 708,735 710,738 725,820 787,848 787,858 845,898 748,860 745,825 717,765 717,765 715,907 697,765 717,780 648,720 520,657 520,597 595,735
697,755 750,817 795,875 585,845 570,622 597,662 610,680 620,660 620,700 605,637 500,620 505,578 503,560 495,540 525,572 533,622 558,655 565,622 525,625
495,530 465,508 472,532 487,548 403,500 385,465 430,518 400,425 262,407 202,325 287,387 325,420 322,380 172,350 160,380 318,428 315,425 290,335 303,380
263,355 265,347 285,325 317,372 347,375 283,443 358,425 387,482 435,568 415,488 340,425 340,443 355,440 373,425 348,415 345,435
445,557 478,585 570,642 610,707 643,697 668,758 478,752 570,665 620,705 595,730 665,773 678,765 715,752 713,765 695,767 658,720 603,705 632,685 657,700
683,738 653,710 657,780 752,775 718,755 750,852 780,898 780,912 755,852 715,852 738,812 740,803 662,780 643,733 650,795 630,682 627,687 647,685 673,692
663,722 690,818 693,780 695,763 697,787 723,755 658,728 695,755 723,807 673,780 637,697 610,665 612,673 612,673 653,685 648,705 657,693 587,665 637,705
680,735 700,770 763,820 597,807 653,700 667,710 670,712 663,703 690,795 695,730 668,750 705,800 743,803 793,850 820,850 840,912 907,968 832,1007 805,870
832,880 820,880 787,865 815,877 750,850 752,850 803,880 877,953 905,957 920,957 850,952 880,918 850,943 885,935 900,912 898,912 875,905 873,935 935,1087
1020,1090 1045,1090 1065,1098 1058,1090 1060,1090 993,1090 998,1030 1010,1035 950,1010 968,1018 955,1057 1030,1055 978,1055 947,987 965,1040 1018,1060
1030,1090 1020,1103 1030,1090 1015,1057 1018,1085 1080,1125 1087,1127 1112,1155 1120,1138 1125,1160 1103,1137 1130,1150 1065,1145 1025,1112 940,1035
932,977 945,1018 943,985 940,1028 982,1010 980,1020 995,1003`));
average(gbp.svg, pairs('40,1040 75,1032 110,1015 150,980 200,960 247,945 275,965 300,985 325,1002 370,1015 385,1000 410,950 450,890 485,848 515,845 535,825 560,795 610,765 640,740 690,727 730,743 760,745 800,758 830,725 865,717 880,693 910,675 935,653 950,650 985,590 1000,585 1040,540 1075,505 1110,430 1140,390 1170,352 1200,330 1215,342 1230,345 1255,370 1280,372 1300,387')
  .concat(shift(pairs('0,410 30,470 55,520 75,550 95,610 125,675 140,690 180,688 215,715 275,762 310,747 365,707 400,690 415,705 440,706 480,692 510,682 530,690 550,684 605,707 660,765 700,822 760,870 785,873 830,893 860,950 895,985 930,1002 955,1030 1010,1015 1030,1020 1055,1047 1100,1087 1120,1080 1150,1060 1180,1030'), HALF)));
gbp.tag();

// USDCHF with MACD
const chf = frame('usdchf', {
  left: 31, split: true, last: 287, tag: '0.92145', title: 'USDCHF,M1  0.92142 0.92150 0.92141 0.92145', times: long,
  rows: [151, 243, 334, 425, 517, 607, 698, 789].map((y, i) => [y, (0.92175 - 0.0002 * i).toFixed(5)])
});
bars(chf.svg, 33, 2463, pairs(`360,407 385,412 403,422 410,448 400,430 390,432 298,390 297,310 240,300 215,245 215,258 247,280 258,283 260,280 247,272 255,303 300,325
275,310 282,298 287,372 340,388 352,390 338,398 380,468 375,457 375,425 373,427 383,492 430,492 445,543 478,512 490,515 497,582 585,625 517,652 518,572
478,540 488,607 543,612 560,575 555,575 528,615 525,545 520,540 535,567 562,665 600,660 598,657 575,623 563,600 530,570 513,550 520,557 512,630 603,635
620,667 637,750 720,765 748,767 750,793 725,787 680,765 680,717 630,718 615,685 607,657 627,657 625,680 615,660 643,730 728,762 735,790 750,790 697,757
697,718 630,713 627,638 603,637 593,660 633,680 505,655 517,542 517,567 557,720 715,762 627,735 673,737 650,740 647,710 540,670 525,600 590,637 575,640
577,673 573,717 495,583 513,607 585,640 547,597 555,622 597,670 600,697 603,697 650,730 620,717 592,667 600,657 610,660 610,655 640,690 690,725 673,713
693,713 690,727 660,707 605,675 530,620 467,547 387,520 320,400 250,400 168,307 123,320 278,415 380,448 383,520 425,490 393,427 405,575 467,540 325,480
250,350 247,368 320,377 345,402 375,453 450,475 475,527 510,612 460,527 485,545 497,572 500,550 545,625 495,555
453,560 425,487 443,485 452,492 465,500 478,515 485,535 495,540 468,520 483,570 530,570 537,570 550,590 560,593 543,595 585,610 573,625 577,613 552,600
563,592 552,590 555,592 565,607 483,590 457,540 475,530 495,545 523,593 512,565 503,555 530,640 580,643 565,630 592,625 597,757 680,770 677,710 687,720
673,750 710,740 730,760 683,787 703,765 745,788 742,760 667,757 670,717 615,700 600,632 587,630 597,675 610,655 607,655 607,662 630,730 653,730 683,740
690,722 638,710 622,685 642,700 645,697 660,718 690,735 650,760 670,745 640,690 573,657 607,680 555,662 540,580 470,578 465,527 487,555 537,563 543,570
562,590 583,620 525,607 520,583 508,570 507,555 490,540 433,513 485,530 513,557 530,557 478,550 495,583 510,553 513,550 513,550 510,590 490,600 437,553
457,497 475,510 457,515 443,510 500,535 507,575 570,607 513,577 497,545 513,565 490,550 513,545 457,513 437,477 433,477 443,503 412,533 523,590 563,602
560,580 530,577 480,550 447,500 430,523 520,555 513,545 487,543 477,535 447,503 403,453 317,423 310,365 265,353 277,383 255,313 263,307`));
const macd = pairs('31,1022 60,1031 80,1025 95,1003 110,965 125,953 150,950 175,960 192,970 205,990 225,1018 240,1040 265,1060 300,1105 330,1150 345,1150 355,1138 385,1145 415,1118 430,1127 450,1135 475,1110 497,1082 520,1095 545,1135 570,1162 600,1120 640,1080 675,1110 710,1072 740,1038 750,1003 763,990 772,1010 785,1030 810,1045 830,1020 850,1013 880,990 910,983 930,1002 950,1022 975,1030 1000,1042 1040,1065 1060,1045 1075,1005 1093,940 1110,850 1120,838 1140,853 1165,890 1185,935 1205,905 1225,912 1240,942 1260,995 1285,1020 1310,1050')
  .concat(shift(pairs('4,1043 20,1037 45,1030 80,1045 110,1065 150,1087 180,1085 210,1065 230,1040 265,1030 300,1055 325,1105 355,1132 390,1137 420,1110 440,1070 465,1035 485,1037 510,1055 540,1040 575,1055 600,1035 615,1022 630,995 645,963 665,957 690,970 715,975 745,957 775,963 805,975 840,997 880,978 905,997 920,1012 955,1017 975,993 1000,990 1015,1015 1040,1027 1065,1013 1085,1025 1105,1017 1120,995 1135,955 1150,925 1175,900'), HALF));
let hist = '';
for (let x = 32, j = 0; x < HALF + 1175; x += 8.906) {
  while (macd[j + 1][0] < x) j++;
  const [x0, y0] = macd[j], [x1, y1] = macd[j + 1];
  hist += `M${x} 1027V${y0 + (y1 - y0) * (x - x0) / (x1 - x0)}`;
}
add(chf.svg, 'path', { d: hist, stroke: '#c0c0c0', 'stroke-width': 2.3 });
add(chf.svg, 'path', { d: `M31 1027H${chf.R}`, stroke: '#c0c0c0', 'stroke-width': 2.2, 'stroke-dasharray': '6.7 4.5' });
average(chf.svg, pairs('31,1015 85,1022 110,1015 130,990 165,960 185,955 205,962 235,990 270,1032 320,1095 360,1135 395,1143 460,1130 530,1102 560,1110 605,1143 670,1098 715,1090 745,1072 775,1030 815,1020 845,1027 880,1018 915,995 950,995 975,1010 1030,1042 1060,1052 1090,1030 1120,960 1150,885 1175,872 1210,900 1270,940 1320,1015')
  .concat(shift(pairs('30,1040 95,1038 130,1058 180,1080 215,1080 270,1045 305,1045 345,1080 400,1130 425,1128 455,1095 505,1048 600,1048 640,1030 690,968 815,962 840,975 925,988 970,1005 1045,1003 1070,1018 1110,1022 1145,995 1170,960'), HALF)), { 'stroke-dasharray': '6.700 4.500' });
[[833, '0.000217'], [1027, '0.00'], [1165, '-0.000161']].forEach(([y, t]) => add(chf.svg, 'text', { x: chf.R + 7, y: y + 7, fill: '#fff' }, t));
add(chf.svg, 'text', { x: 41, y: 845, fill: '#fff' }, 'MACD(12,26,9) 0.000133 0.000076');
chf.tag();

// USDJPY with CCI
const jpy = frame('usdjpy', {
  left: 38, split: true, last: 187, tag: '115.223', title: 'USDJPY,M1  115.220 115.228 115.220 115.223', times: short,
  rows: [145, 236, 328, 416, 508, 599, 691, 781].map((y, i) => [y, (115.23 - 0.015 * i).toFixed(3)])
});
candles(jpy.svg, 40, pairs(`260,283,355,437,0 270,290,307,338,1 305,305,308,362,0 303,303,372,388,1 330,372,374,417,1 373,375,473,527,1 422,457,473,490,0 360,363,460,478,0
357,363,392,415,1 387,388,442,447,1 370,435,457,470,1 252,370,460,460,0 373,375,503,503,1 470,497,503,540,1 470,508,641,643,1 590,597,635,673,0
550,592,617,623,1 580,612,617,650,0 590,600,612,660,0 525,563,593,612,0 550,570,590,605,1 482,485,593,593,0 430,478,527,530,1 448,478,533,547,0
470,472,508,523,1 470,485,503,512,0 458,472,515,517,1 453,480,515,517,0 480,485,533,550,1 443,458,540,547,0 417,423,453,497,0 345,355,415,417,0
353,355,465,508,1 443,465,557,563,1 530,538,557,615,0 508,527,533,547,0 530,532,667,690,1 587,648,673,680,0 557,580,650,795,0 495,555,575,577,0
490,555,557,617,1 525,557,583,587,1 490,503,590,590,0 453,503,508,515,0 480,508,510,540,0 455,503,508,515,1 470,478,497,503,0 430,447,485,490,0
453,455,563,570,1 555,557,600,635,1 598,600,604,682,0 580,592,605,637,0 587,588,625,635,1 573,592,617,650,0 508,508,590,595,0 508,510,547,550,1
542,550,575,598,1 570,573,600,612,1 603,605,660,715,1 607,632,657,673,0 570,617,657,673,1 630,655,675,683,1 633,635,673,710,0 590,615,650,652,0
575,613,615,660,1 570,590,617,643,0 475,478,600,612,0 440,473,478,503,1 477,478,557,557,1 523,527,550,572,0 485,520,545,552,1 513,550,660,675,1
650,655,673,723,0 580,592,660,703,0 600,605,655,698,1 617,630,642,715,0 573,580,625,650,0 545,550,580,592,0 503,508,540,557,0 483,508,509,547,0
415,465,520,523,0 453,465,497,503,1 478,497,508,515,1 490,508,550,557,1 525,548,550,563,0 520,532,547,552,0 500,520,527,533,0 520,525,527,557,0
485,490,527,530,0 412,430,485,503,0 433,437,483,508,1 490,490,533,547,1 500,508,527,550,0 490,513,515,540,0 465,472,520,540,0 400,405,480,483,0
388,410,448,455,1 448,448,540,545,1 507,522,547,547,0 520,527,572,607,1 550,565,570,600,1 513,532,572,572,0 503,527,532,533,1 470,485,527,527,0
413,417,490,525,0 363,405,412,430,0 348,355,400,400,0 368,370,440,443,1 400,430,437,465,0 397,410,437,450,1 410,412,440,467,0 398,415,423,440,1
375,398,423,425,0 355,380,398,403,0 362,373,432,443,1 403,412,427,440,0 410,412,437,450,1 410,412,437,450,0 387,388,412,437,0 368,393,417,437,1
395,397,425,457,0 387,393,407,417,0 373,390,392,412,0 380,400,440,447,1 412,433,435,447,0 410,435,485,497,1 430,430,480,497,0 435,437,447,473,1
410,440,443,443,1 378,380,437,437,0 245,247,375,375,0 162,193,255,262,0 197,198,285,290,1 195,205,280,297,0 162,197,212,230,0 187,193,215,250,1
187,210,212,217,1 153,187,207,207,0`));
add(jpy.svg, 'path', { d: `M38 1024H${jpy.R}`, stroke: '#778899', 'stroke-width': 2.2, 'stroke-dasharray': '6.7 4.5' });
add(jpy.svg, 'path', { d: `M38 965H${jpy.R}M38 1087H${jpy.R}`, stroke: '#d8d8d8', 'stroke-width': 2.2, 'stroke-dasharray': '6.7 4.5' });
const cci = pairs('40,1127 58,1093 112,1091 130,1110 148,1098 165,1067 182,1060 200,1073 220,1073 236,1017 255,1090 272,1110 290,1143 308,1141 325,1110 343,1098 361,1088 379,1055 398,1056 415,1028 432,1007 450,999 468,999 486,979 504,981 521,973 539,1003 557,980 575,948 593,893 610,965 628,1065 646,1127 664,1078 682,1160 700,1133 718,1110 735,1042 753,1054 771,1046 807,995 824,1001 842,977 878,948 896,1015 914,1065 932,1088 950,1073 968,1086 986,1073 1003,1018 1020,1018 1040,1047 1056,1058 1074,1102 1092,1075 1110,1070 1128,1097 1146,1087 1163,1032 1181,1042 1199,1010 1217,935 1234,922 1252,970 1270,978 1288,972 1306,1045 1324,1083')
  .concat(shift(pairs('22,1050 40,1067 57,1071 75,1037 93,1005 111,983 129,978 147,955 165,965 182,982 200,1001 218,1010 236,1004 253,998 271,1014 289,988 307,927 325,970 343,1050 379,1037 396,990 414,908 432,937 450,1040 468,1063 485,1111 503,1108 521,1067 539,1047 557,1008 575,960 593,927 610,929 628,975 646,993 664,990 682,993 700,990 735,970 753,1000 771,1018 789,1045 807,1049 825,1002 842,1010 860,1030 878,973 896,967 914,1055 932,1087 950,1157 967,1110 985,1097 1003,1045 1020,970 1038,838 1056,845 1074,933 1092,943 1110,950 1128,970 1146,975 1163,972'), HALF));
add(jpy.svg, 'path', { d: poly(cci), fill: 'none', stroke: '#20b2aa', 'stroke-width': 2.4 });
[[833, '332.6125'], [965, '100'], [1024, '0.00'], [1087, '-100'], [1165, '-250.8125']].forEach(([y, t]) => add(jpy.svg, 'text', { x: jpy.R + 7, y: y + 7, fill: '#fff' }, t));
add(jpy.svg, 'text', { x: 48, y: 845, fill: '#fff' }, 'CCI(14) 83.9342');
jpy.tag();

// Tick chart of the order dialog
const tk = document.getElementById('ticks');
let tg = '';
for (let k = 0; k < 7; k++) tg += `M${1000 + 71.25 * k} 379V1087`;
for (let k = 0; k < 9; k++) tg += `M927 ${445 + 71.3 * k}H1485`;
add(tk, 'path', { d: tg, stroke: '#c4c4c4', 'stroke-width': 2.4, 'stroke-dasharray': '9 5' });
add(tk, 'path', { d: 'M926 379H1485V1088H926Z', fill: 'none', stroke: '#333', 'stroke-width': 3 });
add(tk, 'path', { d: poly(pairs('928,700 935,620 943,540 945,510 951,540 955,560 965,640 972,590 976,605 979,575 985,620 992,660 998,750 1003,850 1010,930 1013,993 1018,960 1022,993 1026,960 1030,993')), fill: 'none', stroke: '#1464f0', 'stroke-width': 3 });
add(tk, 'path', { d: poly(pairs('928,670 937,570 943,475 946,500 951,475 955,520 962,560 968,605 975,570 978,541 984,541 990,600 995,625 997,700 1003,820 1005,880 1012,930 1018,960 1018,928 1030,928 1031,960 1485,960')), fill: 'none', stroke: '#ff7070', 'stroke-width': 3 });
['84', '82', '79', '77', '75', '73', '71', '68', '66', '64'].forEach((t, i) => {
  const y = i === 9 ? 1081 : 445 + 71.3 * i;
  add(tk, 'path', { d: `M1485 ${y}h7`, stroke: '#333', 'stroke-width': 2 });
  add(tk, 'text', { x: 1497, y: y + 7 }, '1.135' + t);
});
add(tk, 'rect', { x: 1489, y: 947, width: 90, height: 26, fill: '#ff5050' });
add(tk, 'text', { x: 1497, y: 967, fill: '#fff' }, '1.13568');
add(tk, 'text', { x: 932, y: 401 }, 'EURUSD');
```
